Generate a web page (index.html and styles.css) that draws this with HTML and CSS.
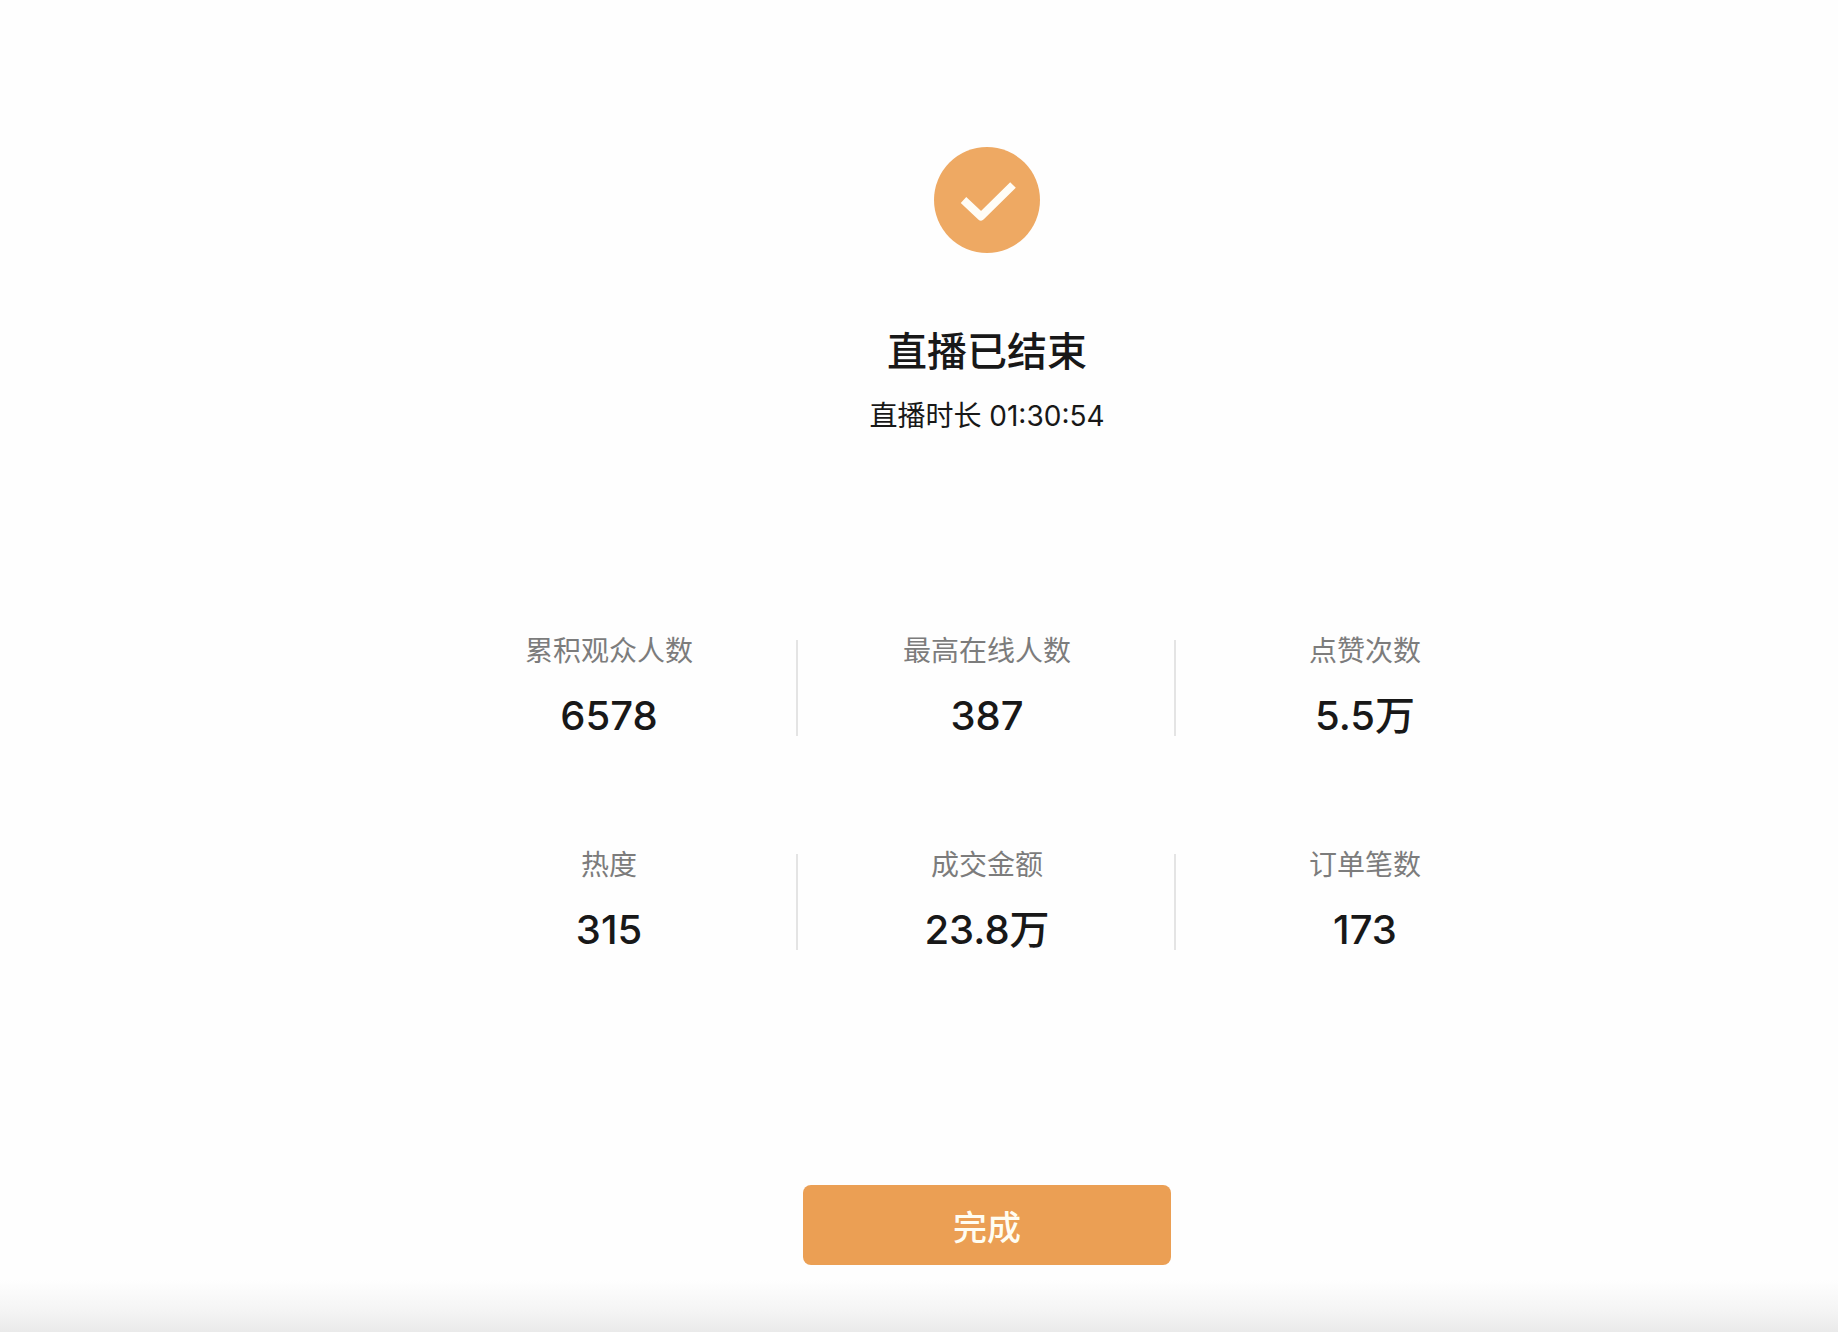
FILE: index.html
```
<!DOCTYPE html>
<html lang="zh-CN">
<head>
<meta charset="UTF-8">
<meta name="viewport" content="width=device-width, initial-scale=1">
<title>直播已结束</title>
<link rel="stylesheet" href="styles.css">
</head>
<body>
<main class="result">
	<svg class="result-icon" viewBox="0 0 106 106" aria-hidden="true">
		<circle cx="53" cy="53" r="53" fill="#eea963"/>
		<path d="M29.500 53L47 69.500L79 38" fill="none" stroke="#fffdf6" stroke-width="8" stroke-linejoin="round"/>
	</svg>
	<h1 class="result-title">直播已结束</h1>
	<p class="result-time">直播时长 01:30:54</p>

	<dl class="stats">
		<div class="stat">
			<dt>累积观众人数</dt>
			<dd>6578</dd>
		</div>
		<div class="stat">
			<dt>最高在线人数</dt>
			<dd>387</dd>
		</div>
		<div class="stat">
			<dt>点赞次数</dt>
			<dd>5.5万</dd>
		</div>
		<div class="stat">
			<dt>热度</dt>
			<dd>315</dd>
		</div>
		<div class="stat">
			<dt>成交金额</dt>
			<dd>23.8万</dd>
		</div>
		<div class="stat">
			<dt>订单笔数</dt>
			<dd>173</dd>
		</div>
	</dl>

	<button class="done" type="button">完成</button>
</main>
<div class="bottom-shade"></div>
</body>
</html>
```

FILE: styles.css
```
* {
	box-sizing: border-box;
}
body {
	display: flex;
	flex-direction: column;
	min-height: 100vh;
	margin: 0;
	background: #fefefe;
	color: #181818;
	font-family: Inter, "Noto Sans CJK SC", sans-serif;
}
.result {
	display: flex;
	flex-direction: column;
	align-items: center;
	padding: 147px 0 0 136px;
}
.result-icon {
	width: 106px;
	height: 106px;
}
.result-title {
	margin: 69px 0 0;
	font-size: 40px;
	font-weight: 500;
	line-height: 60px;
}
.result-time {
	margin: 14px 0 0;
	font-size: 28px;
	line-height: 40px;
}
.stats {
	display: grid;
	grid-template-columns: repeat(3, 1fr);
	row-gap: 84px;
	width: 100%;
	max-width: 1134px;
	margin: 185px 0 0;
}
.stat {
	display: flex;
	flex-direction: column;
	align-items: center;
	gap: 20px;
	padding: 10px 0;
}
/* divider between columns */
.stat:not(:nth-child(3n)) {
	background: linear-gradient(#e4e4e4, #e4e4e4) right bottom 15px / 2px 96px no-repeat;
}
.stat dt {
	color: #7c7c7c;
	font-size: 28px;
	line-height: 40px;
}
.stat dd {
	margin: 0;
	font-size: 40px;
	font-weight: 500;
	line-height: 50px;
}
.done {
	width: 368px;
	height: 80px;
	margin: 220px 0 0;
	border: 0;
	border-radius: 8px;
	background: #eb9f54;
	color: #fffdf2;
	font-family: inherit;
	font-size: 34px;
	font-weight: 500;
	cursor: pointer;
}
.bottom-shade {
	height: 52px;
	margin-top: auto;
	background: linear-gradient(#fefefe, #f5f5f5 55%, #eaeaea);
}
```
